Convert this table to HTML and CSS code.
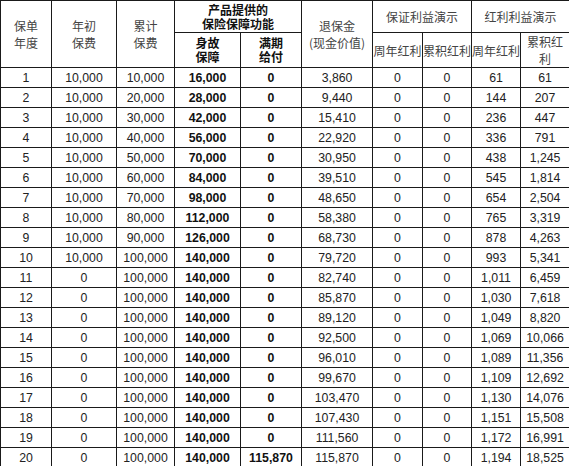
FILE: index.html
```html
<!DOCTYPE html>
<html lang="zh">
<head>
<meta charset="utf-8">
<link rel="stylesheet" href="styles.css">
</head>
<body>
<table class="grid">
<colgroup>
<col class="c1"><col class="c2"><col class="c3"><col class="c4"><col class="c5"><col class="c6"><col class="c7"><col class="c8"><col class="c9"><col class="c10">
</colgroup>
<thead>
<tr class="h1">
<th rowspan="2" class="hd">保单<br>年度</th>
<th rowspan="2" class="hd">年初<br>保费</th>
<th rowspan="2" class="hd">累计<br>保费</th>
<th colspan="2" class="hd strong top">产品提供的<br>保险保障功能</th>
<th rowspan="2" class="hd">退保金<br>(现金价值)</th>
<th colspan="2" class="hd">保证利益演示</th>
<th colspan="2" class="hd">红利利益演示</th>
</tr>
<tr class="h2">
<th class="hd strong tight">身故<br>保障</th>
<th class="hd strong tight">满期<br>给付</th>
<th class="hd">周年红利</th>
<th class="hd">累积红利</th>
<th class="hd">周年红利</th>
<th class="hd wrap">累积红<br>利</th>
</tr>
</thead>
<tbody>
<tr><td>1</td><td>10,000</td><td>10,000</td><td class="b">16,000</td><td class="b">0</td><td>3,860</td><td>0</td><td>0</td><td>61</td><td>61</td></tr>
<tr><td>2</td><td>10,000</td><td>20,000</td><td class="b">28,000</td><td class="b">0</td><td>9,440</td><td>0</td><td>0</td><td>144</td><td>207</td></tr>
<tr><td>3</td><td>10,000</td><td>30,000</td><td class="b">42,000</td><td class="b">0</td><td>15,410</td><td>0</td><td>0</td><td>236</td><td>447</td></tr>
<tr><td>4</td><td>10,000</td><td>40,000</td><td class="b">56,000</td><td class="b">0</td><td>22,920</td><td>0</td><td>0</td><td>336</td><td>791</td></tr>
<tr><td>5</td><td>10,000</td><td>50,000</td><td class="b">70,000</td><td class="b">0</td><td>30,950</td><td>0</td><td>0</td><td>438</td><td>1,245</td></tr>
<tr><td>6</td><td>10,000</td><td>60,000</td><td class="b">84,000</td><td class="b">0</td><td>39,510</td><td>0</td><td>0</td><td>545</td><td>1,814</td></tr>
<tr><td>7</td><td>10,000</td><td>70,000</td><td class="b">98,000</td><td class="b">0</td><td>48,650</td><td>0</td><td>0</td><td>654</td><td>2,504</td></tr>
<tr><td>8</td><td>10,000</td><td>80,000</td><td class="b">112,000</td><td class="b">0</td><td>58,380</td><td>0</td><td>0</td><td>765</td><td>3,319</td></tr>
<tr><td>9</td><td>10,000</td><td>90,000</td><td class="b">126,000</td><td class="b">0</td><td>68,730</td><td>0</td><td>0</td><td>878</td><td>4,263</td></tr>
<tr><td>10</td><td>10,000</td><td>100,000</td><td class="b">140,000</td><td class="b">0</td><td>79,720</td><td>0</td><td>0</td><td>993</td><td>5,341</td></tr>
<tr><td>11</td><td>0</td><td>100,000</td><td class="b">140,000</td><td class="b">0</td><td>82,740</td><td>0</td><td>0</td><td>1,011</td><td>6,459</td></tr>
<tr><td>12</td><td>0</td><td>100,000</td><td class="b">140,000</td><td class="b">0</td><td>85,870</td><td>0</td><td>0</td><td>1,030</td><td>7,618</td></tr>
<tr><td>13</td><td>0</td><td>100,000</td><td class="b">140,000</td><td class="b">0</td><td>89,120</td><td>0</td><td>0</td><td>1,049</td><td>8,820</td></tr>
<tr><td>14</td><td>0</td><td>100,000</td><td class="b">140,000</td><td class="b">0</td><td>92,500</td><td>0</td><td>0</td><td>1,069</td><td>10,066</td></tr>
<tr><td>15</td><td>0</td><td>100,000</td><td class="b">140,000</td><td class="b">0</td><td>96,010</td><td>0</td><td>0</td><td>1,089</td><td>11,356</td></tr>
<tr><td>16</td><td>0</td><td>100,000</td><td class="b">140,000</td><td class="b">0</td><td>99,670</td><td>0</td><td>0</td><td>1,109</td><td>12,692</td></tr>
<tr><td>17</td><td>0</td><td>100,000</td><td class="b">140,000</td><td class="b">0</td><td>103,470</td><td>0</td><td>0</td><td>1,130</td><td>14,076</td></tr>
<tr><td>18</td><td>0</td><td>100,000</td><td class="b">140,000</td><td class="b">0</td><td>107,430</td><td>0</td><td>0</td><td>1,151</td><td>15,508</td></tr>
<tr><td>19</td><td>0</td><td>100,000</td><td class="b">140,000</td><td class="b">0</td><td>111,560</td><td>0</td><td>0</td><td>1,172</td><td>16,991</td></tr>
<tr><td>20</td><td>0</td><td>100,000</td><td class="b">140,000</td><td class="b">115,870</td><td>115,870</td><td>0</td><td>0</td><td>1,194</td><td>18,525</td></tr>
</tbody>
</table>
</body>
</html>
```
FILE: styles.css
```css
html, body {
  margin: 0;
  padding: 0;
  background: #fff;
}

.grid {
  border-collapse: collapse;
  table-layout: fixed;
  width: 569px;
  font-family: "Liberation Sans", Arial, "Noto Sans CJK SC", sans-serif;
  font-size: 12.3px;
  color: #222;
}

.c1 { width: 51px; }
.c2 { width: 65px; }
.c3 { width: 58px; }
.c4 { width: 66px; }
.c5 { width: 61px; }
.c6 { width: 71px; }
.c7 { width: 50px; }
.c8 { width: 49px; }
.c9 { width: 49px; }
.c10 { width: 49px; }

.grid th,
.grid td {
  border: 1px solid #1a1a1a;
  padding: 0;
  text-align: center;
  vertical-align: middle;
  white-space: nowrap;
  overflow: visible;
}

.h1 { height: 32px; }
.h2 { height: 33px; }

.hd {
  font-family: "Noto Sans CJK SC", "Liberation Sans", sans-serif;
  font-weight: normal;
  font-size: 12px;
  line-height: 17px;
  color: #444;
}

.hd.strong {
  font-weight: bold;
  color: #111;
}

.hd.top {
  line-height: 14px;
  vertical-align: bottom;
  padding-bottom: 1px;
}

.hd.tight {
  line-height: 14px;
}

.hd.wrap {
  line-height: 17px;
}

.grid tbody tr {
  height: 20px;
}

.grid td {
  line-height: 14px;
}

.grid td.b {
  font-weight: bold;
  color: #111;
}
```
